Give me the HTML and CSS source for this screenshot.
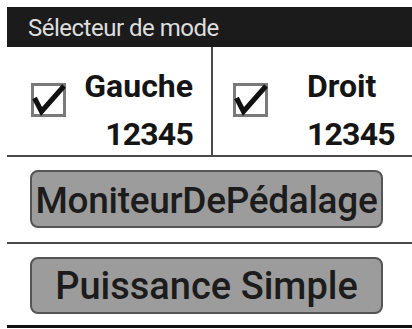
FILE: index.html
```html
<!DOCTYPE html>
<html lang="fr">
<head>
<meta charset="utf-8">
<title>Sélecteur de mode</title>
<link rel="stylesheet" href="styles.css">
</head>
<body>
<div class="screen">
  <div class="header">Sélecteur de mode</div>
  <div class="sides">
    <div class="side side-left">
      <svg class="check" viewBox="0 0 36 36" width="36" height="36" aria-hidden="true">
        <rect x="1.5" y="1.5" width="32" height="31" fill="none" stroke="#7a7a7a" stroke-width="3"/>
        <path d="M3.5 15 L10.5 28.5 L33 3" fill="none" stroke="#111" stroke-width="5" stroke-linejoin="miter"/>
      </svg>
      <div class="label label-right">
        <div class="line">Gauche</div>
        <div class="line line2">12345</div>
      </div>
    </div>
    <div class="side side-right">
      <svg class="check" viewBox="0 0 36 36" width="36" height="36" aria-hidden="true">
        <rect x="1.5" y="1.5" width="32" height="31" fill="none" stroke="#7a7a7a" stroke-width="3"/>
        <path d="M3.5 15 L10.5 28.5 L33 3" fill="none" stroke="#111" stroke-width="5" stroke-linejoin="miter"/>
      </svg>
      <div class="label">
        <div class="line">Droit</div>
        <div class="line line2">12345</div>
      </div>
    </div>
  </div>
  <div class="btn btn-first">MoniteurDePédalage</div>
  <div class="rule"></div>
  <div class="btn btn-second">Puissance Simple</div>
  <div class="rule rule-bottom"></div>
</div>
</body>
</html>
```

FILE: styles.css
```css
html, body {
  margin: 0;
  padding: 0;
  background: #ffffff;
}
body {
  font-family: Roboto, "Liberation Sans", sans-serif;
  color: #151515;
  width: 412px;
  height: 329px;
  overflow: hidden;
}
.screen {
  padding-top: 7px;
}
.header {
  margin-left: 7px;
  height: 40px;
  box-sizing: border-box;
  padding: 2px 0 0 21px;
  line-height: 38px;
  background: #1b1b1b;
  color: #dedede;
  font-size: 24px;
  letter-spacing: -0.5px;
}
.sides {
  margin-left: 7px;
  display: flex;
  height: 108px;
  border-bottom: 2px solid #4a4a4a;
}
.side {
  display: flex;
  align-items: flex-start;
  box-sizing: border-box;
  padding-top: 23px;
}
.side-left {
  width: 206px;
  padding-left: 24px;
  padding-right: 18px;
  border-right: 2px solid #4a4a4a;
}
.side-right {
  flex: 1;
  padding-left: 20px;
}
.check {
  flex: none;
  margin-top: 13px;
  display: block;
}
.label {
  font-weight: 700;
  font-size: 32px;
  margin-left: 38px;
}
.label-right {
  margin-left: auto;
  text-align: right;
}
.line {
  height: 32px;
  line-height: 32px;
  white-space: nowrap;
}
.line2 {
  margin-top: 16px;
  letter-spacing: -0.8px;
}
.btn {
  margin-left: 30px;
  width: 353px;
  box-sizing: border-box;
  height: 58px;
  border: 2px solid #555555;
  border-radius: 8px;
  background: #9c9c9c;
  text-align: center;
  font-weight: 500;
  white-space: nowrap;
  color: #1c1c1c;
}
.btn-first {
  margin-top: 13px;
  font-size: 37px;
  line-height: 50px;
  padding-top: 4px;
  letter-spacing: -0.3px;
}
.btn-second {
  margin-top: 13px;
  height: 57px;
  font-size: 38px;
  line-height: 50px;
  padding-top: 2px;
}
.rule {
  margin-left: 7px;
  margin-top: 14px;
  height: 2px;
  background: #4a4a4a;
}
.rule-bottom {
  margin-top: 11px;
  height: 3px;
  background: #111111;
}
```
